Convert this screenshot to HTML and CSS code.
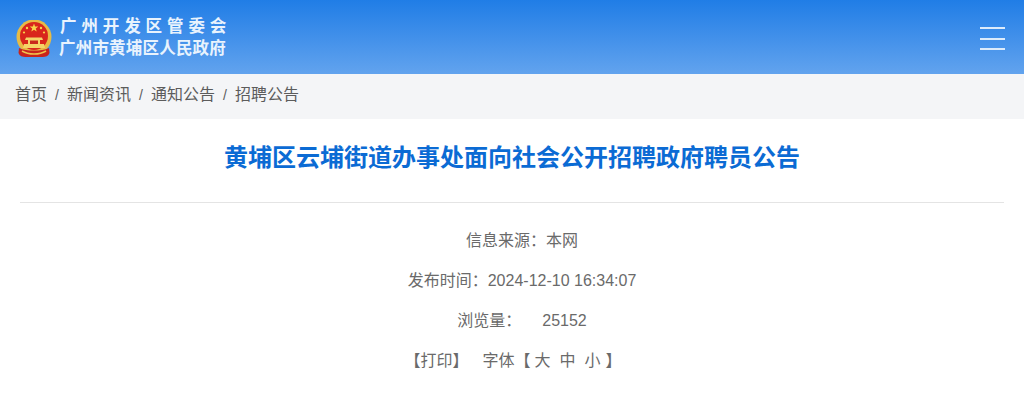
FILE: index.html
```html
<!DOCTYPE html>
<html lang="zh-CN">
<head>
    <meta charset="UTF-8">
    <meta name="viewport" content="width=device-width, initial-scale=1.0">
    <title>黄埔区云埔街道办事处面向社会公开招聘政府聘员公告</title>
    <link rel="stylesheet" href="styles.css">
</head>
<body>
    <header class="top-bar">
        <div class="brand">
            <svg class="emblem" viewBox="0 0 36 37" width="36" height="37">
                <circle cx="18" cy="17" r="17.5" fill="#e8bb45"/>
                <circle cx="18" cy="16" r="14" fill="#d9261c"/>
                <path d="M18 3.5l1.1 3 3.2 .1-2.5 2 .9 3-2.7-1.8-2.7 1.8 .9-3-2.5-2 3.2-.1z" fill="#f8d54a"/>
                <circle cx="11" cy="8" r="1.2" fill="#f8d54a"/>
                <circle cx="25" cy="8" r="1.2" fill="#f8d54a"/>
                <circle cx="8" cy="12.5" r="1.1" fill="#f8d54a"/>
                <circle cx="28" cy="12.5" r="1.1" fill="#f8d54a"/>
                <path d="M10 17.5h16l1 2.5h-3v4h4l1 4H7l1-4h4v-4H9z" fill="#f5d468"/>
                <rect x="14" y="20.5" width="8" height="3.5" fill="#c9281c"/>
                <path d="M3 28c4 2 9 2.5 15 2.5S29 30 33 28l.5 5c-1 3-4 4-7 4H9.5c-3 0-6-1-7-4z" fill="#c9241c"/>
                <path d="M6 31c4 2.5 8 3 12 3s8-.5 12-3" fill="none" stroke="#efc24c" stroke-width="1.5"/>
            </svg>
            <div class="brand-text">
                <div class="brand-line spaced">广州开发区管委会</div>
                <div class="brand-line">广州市黄埔区人民政府</div>
            </div>
        </div>
        <div class="menu-icon">
            <span></span>
            <span></span>
            <span></span>
        </div>
    </header>

    <nav class="crumbs">
        <span>首页</span><i>/</i>
        <span>新闻资讯</span><i>/</i>
        <span>通知公告</span><i>/</i>
        <span>招聘公告</span>
    </nav>

    <main class="article">
        <h1>黄埔区云埔街道办事处面向社会公开招聘政府聘员公告</h1>
        <div class="meta">
            <p>信息来源：本网</p>
            <p>发布时间：2024-12-10 16:34:07</p>
            <p>浏览量：<span class="count">25152</span></p>
            <p class="tools"><span>【打印】</span><span class="font-size">字体【<b>大</b><b>中</b><b>小</b>】</span></p>
        </div>
    </main>
</body>
</html>
```

FILE: styles.css
```css
* {
    box-sizing: border-box;
}
body {
    margin: 0;
    font-family: "Liberation Sans", "Noto Sans CJK SC", sans-serif;
    background-color: #fff;
    color: #6a6a6a;
}
.top-bar {
    height: 74px;
    display: flex;
    align-items: center;
    justify-content: space-between;
    padding: 3px 19px 0 16px;
    background: linear-gradient(180deg, #207de6, #62a3ee);
}
.brand {
    display: flex;
    align-items: center;
    gap: 7px;
}
.brand-text {
    display: flex;
    flex-direction: column;
    gap: 1px;
    margin-top: -3px;
}
.brand-line {
    width: 168px;
    font-size: 16.5px;
    line-height: 21px;
    font-weight: bold;
    letter-spacing: .2px;
    color: #e9f3fd;
    white-space: nowrap;
}
.spaced {
    letter-spacing: 4.9px;
    padding-left: 1px;
}
.menu-icon {
    width: 25px;
    display: flex;
    flex-direction: column;
    gap: 8.3px;
}
.menu-icon span {
    height: 2px;
    background-color: #dcebfb;
}
.crumbs {
    height: 45px;
    display: flex;
    align-items: center;
    padding: 0 15px 3px;
    background-color: #f4f5f7;
    font-size: 16px;
    line-height: 20px;
    color: #5c5c5c;
}
.crumbs i {
    width: 20px;
    font-style: normal;
    font-size: 14px;
    text-align: center;
}
.article {
    padding: 0 20px;
}
h1 {
    margin: 0;
    height: 84px;
    padding-top: 23px;
    border-bottom: 1px solid #e4e4e4;
    text-align: center;
    font-size: 24px;
    line-height: 32px;
    color: #0b6bd4;
}
.meta {
    padding-top: 18px;
    text-align: center;
    font-size: 16px;
}
.meta p {
    margin: 0;
    height: 40px;
    line-height: 40px;
    padding-left: 20px;
}
.count {
    margin-left: 21px;
}
.meta .tools {
    display: flex;
    justify-content: center;
    gap: 14px;
    padding: 0 0 0 2px;
}
.font-size b {
    font-weight: normal;
    margin-left: 9px;
}
.font-size b:first-child {
    margin-left: 4px;
}
.font-size b:last-child {
    margin-right: 5px;
}
```
